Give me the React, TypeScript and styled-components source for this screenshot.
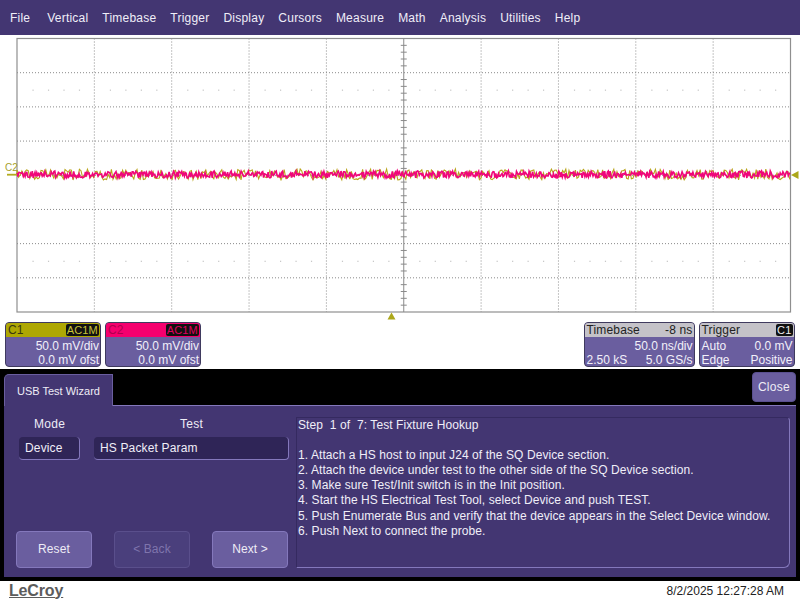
import React from "react";
import styled, { createGlobalStyle } from "styled-components";

const Global = createGlobalStyle`
  html, body { margin: 0; padding: 0; background: #fff; }
  * { box-sizing: border-box; }
`;

const Screen = styled.div`
  width: 800px; height: 600px; overflow: hidden; display: flex; flex-direction: column;
  font-family: "Liberation Sans", Arial, sans-serif; font-size: 12px; color: #f2f0fa; background: #fff;
`;
const MenuBar = styled.nav`
  height: 35px; flex: none; background: #433672; display: flex; align-items: center; padding: 0 0 0 10px; gap: 14px;
`;
const MenuItem = styled.span<{ $first?: boolean }>`
  letter-spacing: 0.22px; color: #f0eef8; margin-right: ${p => (p.$first ? 3 : 0)}px;
`;
const Plot = styled.svg`
  display: block; flex: none; width: 800px; height: 287px;
`;
const DescriptorRow = styled.section`
  height: 47px; flex: none; display: flex; padding: 0 5.5px 0 5px; gap: 4px;
`;
const Descriptor = styled.div<{ $w: number }>`
  width: ${p => p.$w}px; height: 45px; background: #6a5e9f; border: 1px solid #3f3a5e; border-radius: 4px;
  display: flex; flex-direction: column; color: #f2f0fa;
`;
const DescHead = styled.div<{ $bg: string; $fg: string }>`
  height: 14px; background: ${p => p.$bg}; color: ${p => p.$fg}; display: flex; justify-content: space-between; align-items: center;
  padding: 0 1px 0 2px; letter-spacing: 0.15px; flex: none; margin-bottom: 1.5px; border-radius: 3px 3px 0 0;
`;
const Badge = styled.span<{ $fg: string }>`
  background: #111; color: ${p => p.$fg}; border-radius: 2px; padding: 0 1px; line-height: 12px; font-size: 11px; letter-spacing: 0.2px;
`;
const DescLine = styled.div`
  display: flex; justify-content: space-between; padding: 0 1px 0 2px; height: 14.5px; line-height: 14.5px; white-space: nowrap;
`;
const Spacer = styled.div`
  flex: 1;
`;
const Console = styled.section`
  height: 212px; flex: none; background: #000; padding: 3px 4px 4px 4px; display: flex; flex-direction: column;
`;
const TabRow = styled.div`
  display: flex; justify-content: space-between; height: 33px; flex: none; padding-top: 2px;
`;
const Tab = styled.div`
  width: 109px; height: 32px; background: #433672; border: 1px solid #6a5e9f; border-bottom: 0; border-radius: 5px 0 0 0;
  display: flex; align-items: center; justify-content: center; font-size: 11px; margin-bottom: -1px; z-index: 1; color: #eeecf6;
`;
const CloseButton = styled.button`
  width: 44px; height: 30px; margin-top: -2px; background: #6a5e9f; border: 1px solid #5a5090; border-radius: 4px; color: #eeecf6;
  font: inherit; padding: 0; letter-spacing: 0.3px;
`;
const Panel = styled.div`
  flex: 1; background: #433672; border-top: 1px solid #8478bc; display: grid; grid-template-columns: 285px 494px; padding: 11px 0 9px 7px;
`;
const LeftCol = styled.div`
  display: flex; flex-direction: column; justify-content: space-between;
`;
const Fields = styled.div`
  display: grid; grid-template-columns: 61px 195px; column-gap: 14px; padding-left: 8px; row-gap: 6px;
`;
const FieldLabel = styled.div`
  text-align: center; height: 14px; line-height: 14px; letter-spacing: 0.3px; color: #eeecf6;
`;
const ReadBox = styled.div`
  height: 23px; background: #2f2557; border-radius: 4px; border-right: 1px solid #8478bc; border-bottom: 1px solid #8478bc;
  line-height: 22px; padding-left: 6px; letter-spacing: 0.15px; color: #f0eef8;
`;
const Buttons = styled.div`
  display: flex; padding-left: 5px; justify-content: space-between; width: 277px;
`;
const WizardButton = styled.button<{ $disabled?: boolean }>`
  width: 76px; height: 37px; border-radius: 4px; font: inherit; font-size: 12px; letter-spacing: 0.1px; padding: 0 0 2px;
  background: ${p => (p.$disabled ? "#4a3f7c" : "#6a5e9f")};
  border: 1px solid ${p => (p.$disabled ? "#5a4f8c" : "#8478bc")};
  color: ${p => (p.$disabled ? "#7f75ad" : "#eeecf6")};
`;
const StepBox = styled.div`
  border: 1px solid #8478bc; border-top-color: #352a60; border-left-color: #352a60; border-radius: 0 4px 6px 0;
  padding: 0 0 0 1px; line-height: 15.2px; color: #f0eef8; letter-spacing: 0.08px; white-space: pre; margin-top: -0.5px;
`;
const StepLine = styled.div`
  height: 15.2px;
`;
const Footer = styled.footer`
  flex: 1; display: flex; align-items: center; justify-content: space-between; padding: 0 16px 0 9px; background: #fff; color: #222;
`;
const Brand = styled.span`
  font-size: 16px; font-weight: 700; color: #5c5c5c; text-decoration: underline; letter-spacing: -0.15px;
`;
const Clock = styled.span`
  font-size: 12px; color: #222; padding-top: 1px;
`;

const menus = ["File", "Vertical", "Timebase", "Trigger", "Display", "Cursors", "Measure", "Math", "Analysis", "Utilities", "Help"];
const steps = [
  "Step  1 of  7: Test Fixture Hookup",
  "",
  "1. Attach a HS host to input J24 of the SQ Device section.",
  "2. Attach the device under test to the other side of the SQ Device section.",
  "3. Make sure Test/Init switch is in the Init position.",
  "4. Start the HS Electrical Test Tool, select Device and push TEST.",
  "5. Push Enumerate Bus and verify that the device appears in the Select Device window.",
  "6. Push Next to connect the probe.",
];

const X0 = 17, X1 = 790.5, Y0 = 3.5, Y1 = 277;
const dx = (X1 - X0) / 10, dy = (Y1 - Y0) / 8;
const CX = X0 + 5 * dx;

function noise(seed: number, amp: number, step: number): string {
  let s = seed;
  const rnd = () => { s = (s * 16807) % 2147483647; return s / 2147483647 - 0.5; };
  let d = `M${X0} 139.5`;
  for (let x = X0; x < X1; x += step) d += `L${x.toFixed(1)} ${(139.5 + rnd() * amp * (rnd() > 0.75 ? 1.7 : 1)).toFixed(1)}`;
  return d;
}

function GridArt() {
  const v = Array.from({ length: 9 }, (_, i) => X0 + (i + 1) * dx);
  const h = Array.from({ length: 7 }, (_, i) => Y0 + (i + 1) * dy);
  const dotXs: number[] = [];
  for (let i = 0; i < 50; i++) if (i % 5) dotXs.push(X0 + (i * dx) / 5);
  const ticksV: number[] = [];
  for (let i = 1; i < 40; i++) if (i % 5) ticksV.push(Y0 + (i * dy) / 5);
  return (
    <Plot viewBox="0 0 800 287">
      {v.map((x, i) => i !== 4 && (
        <line key={x} x1={x} x2={x} y1={Y0} y2={Y1} stroke="#8a8a8a" strokeDasharray="1 2" />
      ))}
      {h.map(y => <line key={y} x1={X0} x2={X1} y1={y} y2={y} stroke="#8a8a8a" strokeDasharray="1 2" />)}
      {[Y0 + dy + dy / 2 - 0.2, Y0 + 6 * dy + dy / 2].map(y =>
        dotXs.map(x => <rect key={`${x}-${y}`} x={x} y={y} width="1.2" height="1.2" fill="#c4c4c4" />)
      )}
      <rect x={X0} y={Y0} width={X1 - X0} height={Y1 - Y0} fill="none" stroke="#8f8f8f" strokeWidth="1.2" />
      <line x1={CX} x2={CX} y1={Y0} y2={Y1} stroke="#8a8a8a" />
      {ticksV.map(y => <line key={y} x1={CX - 3} x2={CX + 3} y1={y} y2={y} stroke="#8a8a8a" />)}
      <path d={noise(9187, 11, 1.6)} fill="none" stroke="#b9a51c" strokeWidth="1.1" />
      <path d={noise(41221, 7, 0.9)} fill="none" stroke="#f0067a" strokeWidth="1.6" />
      <text x="5" y="136" fontSize="10" fill="#a79f2a" fontFamily="Liberation Sans, sans-serif">C2</text>
      <rect x="7" y="138.8" width="10" height="1.8" fill="#b3ab1e" />
      <polygon points="791,140 798.5,136 798.5,144" fill="#aca71a" />
      <polygon points="391.5,277.5 395.5,284.5 387.5,284.5" fill="#aca71a" />
    </Plot>
  );
}

export default function App() {
  return (
    <Screen>
      <Global />
      <MenuBar>
        {menus.map((m, i) => <MenuItem key={m} $first={i === 0}>{m}</MenuItem>)}
      </MenuBar>
      <GridArt />
      <DescriptorRow>
        <Descriptor $w={96}>
          <DescHead $bg="#aea703" $fg="#3a3810"><span>C1</span><Badge $fg="#c8c23a">AC1M</Badge></DescHead>
          <DescLine><Spacer />50.0 mV/div</DescLine>
          <DescLine><Spacer />0.0 mV ofst</DescLine>
        </Descriptor>
        <Descriptor $w={96}>
          <DescHead $bg="#f5006e" $fg="#b0004f"><span>C2</span><Badge $fg="#e0005f">AC1M</Badge></DescHead>
          <DescLine><Spacer />50.0 mV/div</DescLine>
          <DescLine><Spacer />0.0 mV ofst</DescLine>
        </Descriptor>
        <Spacer />
        <Descriptor $w={111}>
          <DescHead $bg="#c4c2c8" $fg="#222"><span>Timebase</span><span>-8 ns</span></DescHead>
          <DescLine><Spacer />50.0 ns/div</DescLine>
          <DescLine><span>2.50 kS</span><span>5.0 GS/s</span></DescLine>
        </Descriptor>
        <Descriptor $w={96}>
          <DescHead $bg="#c4c2c8" $fg="#222"><span>Trigger</span><Badge $fg="#eee">C1</Badge></DescHead>
          <DescLine><span>Auto</span><span>0.0 mV</span></DescLine>
          <DescLine><span>Edge</span><span>Positive</span></DescLine>
        </Descriptor>
      </DescriptorRow>
      <Console>
        <TabRow>
          <Tab>USB Test Wizard</Tab>
          <CloseButton>Close</CloseButton>
        </TabRow>
        <Panel>
          <LeftCol>
            <Fields>
              <FieldLabel>Mode</FieldLabel>
              <FieldLabel>Test</FieldLabel>
              <ReadBox>Device</ReadBox>
              <ReadBox>HS Packet Param</ReadBox>
            </Fields>
            <Buttons>
              <WizardButton>Reset</WizardButton>
              <WizardButton $disabled>&lt; Back</WizardButton>
              <WizardButton>Next &gt;</WizardButton>
            </Buttons>
          </LeftCol>
          <StepBox>
            {steps.map((s, i) => <StepLine key={i}>{s}</StepLine>)}
          </StepBox>
        </Panel>
      </Console>
      <Footer>
        <Brand>LeCroy</Brand>
        <Clock>8/2/2025 12:27:28 AM</Clock>
      </Footer>
    </Screen>
  );
}
